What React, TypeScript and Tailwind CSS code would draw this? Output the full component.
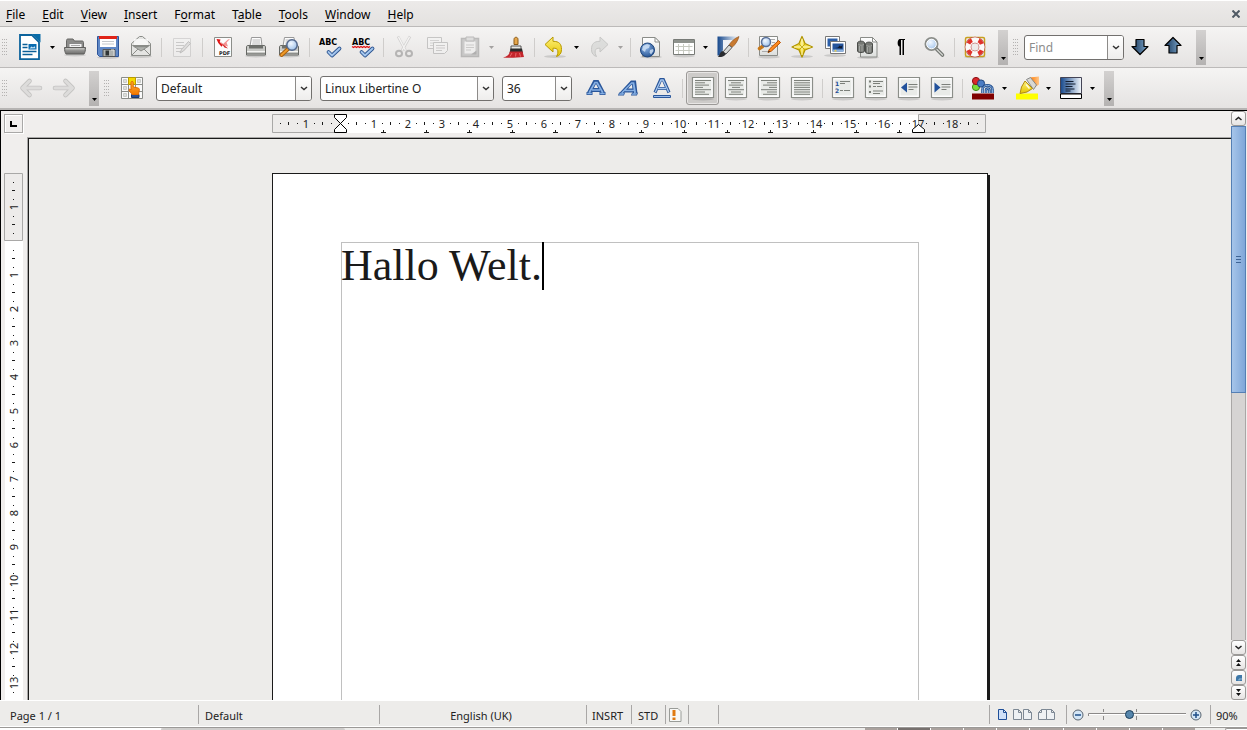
import React, { useEffect, useState } from "react";
import type { ReactNode } from "react";

const UI_FONT = "font-['Noto_Sans',sans-serif]";

function Icon({ children }: { children: ReactNode }) {
  return (
    <svg viewBox="0 0 26 26" className="h-[26px] w-[26px] shrink-0 overflow-visible" fill="none" aria-hidden="true">
      {children}
    </svg>
  );
}

function Gradients() {
  const linear: [string, string, string, boolean][] = [
    ["gPaper", "#ffffff", "#dcdedc", true],
    ["gGray", "#b4b4b2", "#6d6d6b", true],
    ["gYellow", "#fdf07a", "#e5c400", true],
    ["gArrow", "#16365a", "#7fa8cc", false],
    ["gBack", "#16488c", "#f4f8fc", false],
    ["gOrange", "#ff7a00", "#ffc68a", false],
    ["gSkin", "#ffb03a", "#f07800", true],
  ];
  return (
    <svg className="absolute h-0 w-0" aria-hidden="true">
      <defs>
        {linear.map(([id, a, b, down]) => (
          <linearGradient key={id} id={id} x1="0" y1="0" x2={down ? "0" : "1"} y2={down ? "1" : "0"}>
            <stop offset="0" stopColor={a} />
            <stop offset="1" stopColor={b} />
          </linearGradient>
        ))}
        <radialGradient id="gGlobe" cx="0.4" cy="0.35" r="0.7">
          <stop offset="0" stopColor="#8db4e6" />
          <stop offset="1" stopColor="#22508f" />
        </radialGradient>
        <radialGradient id="gLens" cx="0.4" cy="0.35" r="0.7">
          <stop offset="0" stopColor="#f4f9ff" />
          <stop offset="1" stopColor="#9cc0ea" />
        </radialGradient>
      </defs>
    </svg>
  );
}

const Shadow = ({ y = 24 }: { y?: number }) => <ellipse cx="13" cy={y} rx="11" ry="1.5" fill="#000" opacity="0.13" />;

const NewIcon = () => (
  <Icon>
    <path d="M2 1h12l7 7v17.2H2z" fill="#fff" stroke="#0c639c" strokeWidth="1.8" />
    <path d="M14 0h8.500v8.500z" fill="#0a6ca8" />
    <path d="M4.500 10.500h5M4.500 13.500h5M4.500 17.500h14M4.500 20.500h10" stroke="#0a5f98" strokeWidth="1.600" />
    <path d="M10.500 10h8v5.500h-8z" fill="#0a6cb0" />
    <path d="M11.500 14.500l2-2 1.500 1 1.500-1.200 1 2z" fill="#cfe7f7" />
  </Icon>
);
const OpenIcon = () => (
  <Icon>
    <Shadow y={21} />
    <path d="M4.500 6.500c0-1 .5-1.500 1.500-1.500h5l1.500 2h7.500c1 0 1.500.5 1.500 1.500V14h-17z" fill="#8c8c8a" stroke="#666664" />
    <path d="M7 9.500h13v5H7z" fill="#f4f4f4" stroke="#888" />
    <path d="M9 11.500h9" stroke="#aaa" />
    <path d="M2.500 13.500h21c0 3-.5 5-1.500 6.500H4c-1-1.500-1.500-3.500-1.500-6.500z" fill="url(#gGray)" stroke="#5f5f5d" />
    <path d="M4 14.800h18" stroke="#c9c9c7" />
  </Icon>
);
const SaveIcon = () => (
  <Icon>
    <Shadow y={23.500} />
    <path d="M2.500 2.500h21v20h-19l-2-2z" fill="#5f88c6" stroke="#2e559a" />
    <path d="M5 2.500h16v10.500H5z" fill="#fff" />
    <path d="M4 2h18v3H4z" fill="#e02418" />
    <path d="M7 7.500h12M7 10h12" stroke="#c4c8cc" />
    <path d="M8 15.500h12v7H8z" fill="#aeb2b0" stroke="#555" />
    <path d="M10.500 16.500h3.500v5h-3.500z" fill="#2f3435" />
    <path d="M16 16h3v6" stroke="#e2e2e0" />
  </Icon>
);
const MailIcon = () => (
  <Icon>
    <Shadow y={22.500} />
    <path d="M3.500 9.500L11.500 2.500h3l8 7v12h-19z" fill="#e4e4e2" stroke="#8a8c88" />
    <path d="M6 5h14v8.500H6z" fill="#fff" opacity="0.700" />
    <path d="M4.500 11.500h17L13 17z" fill="#b0b2ae" stroke="#8a8c88" />
    <path d="M4 21l6-6M22 21l-6-6" stroke="#8a8c88" />
    <path d="M6 12.500h14" stroke="#8a8c88" strokeWidth="1.500" />
  </Icon>
);
const EditIcon = () => (
  <Icon>
    <g opacity="0.300">
      <path d="M4.500 4.500h17v18h-17z" fill="#f6f6f6" stroke="#999" />
      <path d="M7 8.500h8M7 11.500h8M7 14.500h6M7 17.500h4" stroke="#777" />
      <path d="M11 19l1.500-3.500 7-8 2 2-7 7.500z" fill="#bbb" stroke="#555" />
    </g>
  </Icon>
);
const PdfIcon = () => (
  <Icon>
    <path d="M4.500 3.500h17v19h-17z" fill="#fcfcfc" stroke="#8c8e8a" />
    <path d="M6.500 5l4 .5-.8 2.500 3 3.200-1.200 1.500-3.200-3.600z" fill="#e01414" />
    <path d="M13 10l5-4.500 2-.5-3.500 3.500 1.500 4-3.500-1z" fill="#f29090" />
    <path d="M10 7.500l8 7-3.500-1z" fill="#d42020" />
    <text x="9" y="21" fontSize="5" fontWeight="bold" fill="#222" fontFamily="DejaVu Sans, sans-serif">PDF</text>
  </Icon>
);
const PrinterBody = () => (
  <>
    <Shadow y={22} />
    <path d="M7 12L8.500 3.500h9.500L19 12z" fill="#fdfdfd" stroke="#999" />
    <path d="M9.500 6h7.500M9.500 8h7.500M9 10h8.500" stroke="#bbb" />
    <path d="M3.500 13c0-1 .5-1.500 1.500-1.500h16c1 0 1.500.5 1.500 1.500v8h-19z" fill="#c9cac7" stroke="#666864" />
    <path d="M6 11.500h14v3H6z" fill="#6e706c" />
    <path d="M4 17.500h18" stroke="#f5f5f3" />
    <path d="M4 19.500h18" stroke="#8d8f8b" />
  </>
);
const PrintIcon = () => (
  <Icon>
    <PrinterBody />
  </Icon>
);
const PreviewIcon = () => (
  <Icon>
    <PrinterBody />
    <path d="M12 15l-6.500 6" stroke="#a86010" strokeWidth="4" strokeLinecap="round" />
    <path d="M12 15l-6.500 6" stroke="#f09a28" strokeWidth="2" strokeLinecap="round" />
    <circle cx="16" cy="11" r="5.200" fill="url(#gLens)" stroke="#54688c" strokeWidth="1.500" />
  </Icon>
);
const Check = () => (
  <>
    <path d="M11.500 18l3.500 3.500 7.500-7" stroke="#2d5590" strokeWidth="3.800" strokeLinejoin="round" strokeLinecap="round" />
    <path d="M11.500 18l3.500 3.500 7.500-7" stroke="#a4c6ee" strokeWidth="1.900" strokeLinejoin="round" strokeLinecap="round" />
  </>
);
const Abc = () => (
  <text x="2" y="11" fontSize="8" fontWeight="bold" fill="#000" fontFamily="DejaVu Sans, sans-serif">ABC</text>
);
const SpellIcon = () => (
  <Icon>
    <Abc />
    <Check />
  </Icon>
);
const AutoSpellIcon = () => (
  <Icon>
    <Abc />
    <path d="M2 12.500l1.500 1 1.500-1 1.500 1 1.500-1 1.500 1 1.500-1 1.500 1 1.500-1 1.500 1 1.500-1 1.500 1 1.500-1" stroke="#e01010" strokeWidth="1.200" />
    <Check />
  </Icon>
);
const CutIcon = () => (
  <Icon>
    <g opacity="0.350">
      <path d="M7 2.500l7.500 14M19 2.500l-8 14" stroke="#999" strokeWidth="2.600" />
      <path d="M7.500 3l7 13.500M18.500 3l-7.500 13.500" stroke="#fff" strokeWidth="1.400" />
      <ellipse cx="8" cy="19.500" rx="3" ry="2.800" stroke="#555" strokeWidth="2" />
      <ellipse cx="18" cy="19.500" rx="3" ry="2.800" stroke="#555" strokeWidth="2" />
    </g>
  </Icon>
);
const CopyIcon = () => (
  <Icon>
    <g opacity="0.400">
      <path d="M3.500 3.500h14v11h-14z" fill="#f7f7f7" stroke="#888" />
      <path d="M6 6.500h9M6 9h9M6 11.500h5" stroke="#aaa" />
      <path d="M9.500 8.500h14v8l-3 3h-11z" fill="#f7f7f7" stroke="#888" />
      <path d="M12 11.500h9M12 14h9M12 16.500h6" stroke="#999" />
    </g>
  </Icon>
);
const PasteIcon = () => (
  <Icon>
    <g opacity="0.500">
      <path d="M4.500 4.500h17v18h-17z" fill="#aaa" stroke="#888" strokeWidth="1.500" />
      <path d="M7 7h12v13H7z" fill="#f0f0f0" stroke="#aaa" />
      <path d="M9 3h8v4H9z" fill="#ccc" stroke="#888" />
      <path d="M9 11h8M9 13.500h8M9 16h5" stroke="#aaa" />
      <path d="M14 20.500h5.500v-4z" fill="#777" />
    </g>
  </Icon>
);
const BrushIcon = () => (
  <Icon>
    <path d="M13 10.500V5.500c0-3 4-3 4 0v5z" fill="#e4a54a" stroke="#8a5a18" />
    <path d="M10 12h10v4H10z" fill="#e8e8e4" stroke="#555" />
    <path d="M9.500 14.500h11.500l1 4.500H8.500z" fill="#2c2c2c" />
    <path d="M9 17.500h12.500l1.500 5.500c-6 .5-14 1-21 .5 4-1 6-2.500 7-6z" fill="#c4262c" />
    <path d="M11 19l-2 3.500M15 19l-.5 3.500M18.500 19l1 3.500" stroke="#e86a6a" />
  </Icon>
);
const undoPath = "M3 10.500L11 3v4.300c6.500 0 8.500 3 8.500 8.200 0 3.500-1.500 6-5 7 1.200-2 1.700-4 1.200-6-.6-2-1.700-2.300-4.700-2.300V18z";
const UndoIcon = () => (
  <Icon>
    <Shadow y={22.500} />
    <path d={undoPath} fill="url(#gYellow)" stroke="#b89a00" strokeLinejoin="round" />
  </Icon>
);
const RedoIcon = () => (
  <Icon>
    <g opacity="0.450" transform="translate(25 0) scale(-1 1)">
      <path d={undoPath} fill="#c8cac8" stroke="#9a9c9a" strokeLinejoin="round" />
    </g>
  </Icon>
);
const LinkIcon = () => (
  <Icon>
    <Shadow y={23} />
    <path d="M4.500 3.500h12.500l4.500 4.500v14.500h-17z" fill="url(#gPaper)" stroke="#8a8c88" />
    <path d="M17 3.500v4.500h4.500z" fill="#fff" stroke="#8a8c88" />
    <circle cx="9.500" cy="16" r="7" fill="url(#gGlobe)" stroke="#1f467e" />
    <path d="M5 12l4-2 3 1-1 3-3 1-1 3-3-2zM12 16l3-1 .5 2-2.500 3.500-1.500-2z" fill="#d5e5f6" opacity="0.800" />
  </Icon>
);
const TableIcon = () => (
  <Icon>
    <Shadow y={22} />
    <path d="M2.500 5.500h21v15h-21z" fill="#fff" stroke="#777a76" />
    <path d="M3 6h20v3H3z" fill="#8e928d" />
    <path d="M4.500 12.500h17M4.500 16.500h17M7.500 10v10M12.500 10v10M18 10v10" stroke="#c6c9c0" />
  </Icon>
);
const DrawIcon = () => (
  <Icon>
    <path d="M2.500 2.500H23l-4 3.500H8v10l-3 5.500H2.500z" fill="url(#gBack)" />
    <path d="M8 6.500h11v8H8z" fill="#eef2f8" />
    <path d="M24 2.500c-4 1.500-8 5-10 8.500l3 2.500c3.500-3 6-7 7-11z" fill="#c87a30" stroke="#8c4a10" strokeWidth="0.600" />
    <path d="M14 11l3 2.500-6 6.500-3-2z" fill="#d8dad8" stroke="#555" />
    <path d="M7.500 17l3.500 3c-2 3.500-6 3-8.500 3 2-.5 2-5 5-6z" fill="#2a2c30" />
  </Icon>
);
const FindReplaceIcon = () => (
  <Icon>
    <Shadow y={23} />
    <path d="M3.500 2.500h18v19h-18z" fill="url(#gPaper)" stroke="#8a8c88" />
    <path d="M14 5.500h5M16 8.500h3M15 11.500h4M6 17.500h8" stroke="#aaa" />
    <path d="M6.500 12.500l-3 2" stroke="#c87818" strokeWidth="3.500" strokeLinecap="round" />
    <circle cx="10" cy="8" r="4.500" fill="url(#gLens)" stroke="#5a7098" strokeWidth="1.500" />
    <path d="M12 18.500l1.500-3.500 9-8.500 2 2-9 8.500z" fill="#ff8a1e" stroke="#b84f00" />
    <path d="M12 18.500l.8-2 1.200 1.200z" fill="#222" />
  </Icon>
);
const StarIcon = () => (
  <Icon>
    <Shadow y={22.500} />
    <path d="M13 2.500L16 9.500 23.500 13 16 16l-3 7-3-7-7-3 7-3.500z" fill="url(#gYellow)" stroke="#b09400" strokeWidth="1.300" strokeLinejoin="round" />
    <path d="M13 4.500V21M5 13h16.500" stroke="#fffbd0" />
    <path d="M13 13l3-3M13 13l-3-3M13 13l3 3M13 13l-3 3" stroke="#b9a000" strokeWidth="0.800" />
  </Icon>
);
const GalleryIcon = () => (
  <Icon>
    <Shadow y={21.500} />
    <path d="M3.500 2.500h14v12h-14z" fill="#fff" stroke="#777" />
    <path d="M5.500 4.500h10v8h-10z" fill="#2c5fa8" />
    <path d="M8.500 7.500h15v12h-15z" fill="#fff" stroke="#777" />
    <path d="M10.500 9.500h11v8h-11z" fill="#24549c" />
    <path d="M10.500 15.500h11v2h-11z" fill="#8fb4e0" />
    <path d="M13 14l3-.5 1.500-2 1.500 1 1.500-1.500-.5 3.500z" fill="#101c30" />
    <path d="M12 17.500l1.500-2 1.500 2z" fill="#f5d040" />
  </Icon>
);
const Binocular = ({ x, y }: { x: number; y: number }) => (
  <g transform={`translate(${x} ${y})`}>
    <path d="M0 2c0-2.500 7-2.500 7 0v8c0 2-7 2-7 0z" fill="#777975" stroke="#4a4c49" />
    <path d="M1 3.500c2 1 3.500 1 5.500 0M2 5v5.500M4.500 5v5.500" stroke="#b0b2ae" strokeWidth="0.800" />
  </g>
);
const SourceIcon = () => (
  <Icon>
    <Shadow y={23.500} />
    <path d="M5.500 3.500h12l4.500 4.500v15h-16.500z" fill="url(#gPaper)" stroke="#8a8c88" />
    <path d="M17.500 3.500v4.500h4.500z" fill="#fff" stroke="#8a8c88" />
    <Binocular x={2.500} y={7} />
    <Binocular x={10.500} y={8} />
  </Icon>
);
const PilcrowIcon = () => (
  <Icon>
    <path d="M16 5v16h-1.500V6H13v15h-1.500v-8.500C9 12.500 9 5 12 5z" fill="#000" />
    <path d="M15.500 5.500H17" stroke="#000" />
  </Icon>
);
const ZoomIcon = () => (
  <Icon>
    <path d="M15.500 15l6 6" stroke="#6d706c" strokeWidth="3.600" strokeLinecap="round" />
    <path d="M16 15.500l5.500 5.500" stroke="#d0d2ce" strokeWidth="1.500" strokeLinecap="round" />
    <circle cx="10.500" cy="10" r="6" fill="url(#gLens)" stroke="#8a8d89" strokeWidth="2" />
    <circle cx="10.500" cy="10" r="4.800" stroke="#fff" />
  </Icon>
);
const HelpIcon = () => (
  <Icon>
    <Shadow y={23} />
    <rect x="3.500" y="3.500" width="19" height="19" rx="1.500" stroke="#c8a020" strokeWidth="1.500" />
    <circle cx="13" cy="13" r="7" stroke="#b43a34" strokeWidth="6.500" />
    <circle cx="13" cy="13" r="7" stroke="#fafaf8" strokeWidth="5.400" />
    <circle cx="13" cy="13" r="7.500" stroke="#e0322c" strokeWidth="4.200" strokeDasharray="4.900 6.900" strokeDashoffset="-3.450" />
  </Icon>
);
const FindArrow = ({ up = false }: { up?: boolean }) => (
  <Icon>
    <path
      d={up ? "M13 3.500l8 8h-4v7.500H9v-7.500H5z" : "M9 5.500h8v7h4L13 20.500l-8-8h4z"}
      fill="url(#gArrow)" stroke="#000" strokeWidth="1.200" strokeLinejoin="round"
    />
  </Icon>
);
const NavArrow = ({ right = false }: { right?: boolean }) => (
  <Icon>
    <g transform={right ? "translate(26 0) scale(-1 1)" : undefined} strokeLinecap="round" strokeLinejoin="round">
      <path d="M11.500 6L4.500 13l7 7M5 13h17" stroke="#c4c3c2" strokeWidth="4.600" />
      <path d="M11.500 6L4.500 13l7 7M5 13h17" stroke="#dddcdb" strokeWidth="3" />
    </g>
  </Icon>
);
const StylesIcon = () => (
  <Icon>
    <path d="M2.500 2.500h21v21h-21z" fill="#fafafa" stroke="#8a8c88" />
    <path d="M9.500 2.500v21M16.500 2.500v21M2.500 9.500h21M2.500 16.500h21" stroke="#8a8c88" />
    <path d="M4.500 4.500h3v3h-3zM18.500 4.500h3v3h-3zM4.500 11.500h3v3h-3zM4.500 18.500h3v3h-3z" fill="#dcdedb" stroke="#c8cac7" />
    <path d="M9.500 2.500h7v7h-7z" fill="#f5d800" stroke="#b89a00" />
    <path d="M12.500 19.500h7.500v3h-7.500z" fill="#284f94" stroke="#18366c" />
    <path d="M12 7.500c0-1.500 2.200-1.500 2.200 0V12l4.800 1c1.200.3 1.500 1 1.300 2.200l-.8 4.300H13c-.5-1.500-2.500-2.500-3-4.500 0-1.200 1.200-1.200 2 0z" fill="url(#gSkin)" stroke="#e06a00" strokeLinejoin="round" />
  </Icon>
);
const LetterIcon = ({ kind }: { kind: "bold" | "italic" | "underline" }) => {
  if (kind === "underline")
    return (
      <Icon>
        <path d="M6 17.500L11.700 4.500h2.600L20 17.500M9 13.500h8" stroke="#2a569a" strokeWidth="3.200" />
        <path d="M6.300 17L11.900 5h2.200l5.600 12M9 13.500h8" stroke="#a8c8f0" strokeWidth="1.300" />
        <path d="M4.500 20.500h17v2h-17z" fill="#9abcec" stroke="#2a569a" />
      </Icon>
    );
  return (
    <Icon>
      <g transform={kind === "italic" ? "translate(6.500 .5) skewX(-22)" : undefined}>
        <path d="M6 18L11.700 7h2.600L20 18M9 15h8" stroke="#2a569a" strokeWidth="4" />
        <path d="M3.500 18.500h6M16.500 18.500h6" stroke="#2a569a" strokeWidth="3" />
        <path d="M6.300 17.500L12 7.500h2l5.700 10M9 15h8M4.300 18.500h4.500M17.200 18.500h4.500" stroke="#86b0e4" strokeWidth="1.700" />
      </g>
    </Icon>
  );
};
const Sheet = ({ children }: { children: ReactNode }) => (
  <Icon>
    <Shadow y={24} />
    <path d="M2.500 2.500h21v20h-21z" fill="#fff" stroke="#8b8e89" strokeWidth="1.200" />
    <path d="M4.500 4.500h17v16h-17z" fill="#e9ebe8" />
    {children}
  </Icon>
);
type Align = "left" | "center" | "right" | "justify";
const AlignIcon = ({ align }: { align: Align }) => (
  <Sheet>
    {[16, 10, 14, 8, 16, 10, 14].map((w, i) => {
      const width = align === "justify" ? 16 : w;
      const x = align === "right" ? 21 - width : align === "center" ? 13 - width / 2 : 5;
      return <path key={i} d={`M${x} ${5.5 + i * 2.300}h${width}`} stroke="#7c807a" />;
    })}
  </Sheet>
);
const NumberListIcon = () => (
  <Sheet>
    <text x="5" y="10.500" fontSize="6" fontWeight="bold" fill="#1f4f98" fontFamily="DejaVu Sans, sans-serif">1</text>
    <text x="5" y="18" fontSize="6" fontWeight="bold" fill="#1f4f98" fontFamily="DejaVu Sans, sans-serif">2</text>
    <path d="M10 6.500h10M10 8.500h5M10 15.500h3M14 15.500h6" stroke="#7c807a" />
  </Sheet>
);
const BulletListIcon = () => (
  <Sheet>
    <path d="M6 6.500h2M6 11.500h2M6 17h2" stroke="#7c807a" strokeWidth="2" />
    <path d="M10 6.500h10M10 8.500h7M10 11.500h3M14 11.500h5M10 16h10M10 18.500h7" stroke="#7c807a" />
  </Sheet>
);
const IndentIcon = ({ increase = false }: { increase?: boolean }) => (
  <Sheet>
    <path d={increase ? "M5.500 7.500l6 5-6 5z" : "M11 7.500l-6 5 6 5z"} fill="#22529c" />
    <path d="M12.500 9.500h9M12.500 12h9M12.500 14.500h5" stroke="#7c807a" />
  </Sheet>
);
const FontColorIcon = () => (
  <Icon>
    <circle cx="6" cy="12" r="3.600" fill="#7cdc3c" stroke="#3d8a14" />
    <circle cx="6" cy="6" r="3.600" fill="#d8282c" stroke="#8c1014" />
    <circle cx="11" cy="8.500" r="3.600" fill="#4b7cc4" stroke="#1f447c" />
    <path d="M12.500 18v-3.500c0-5.500 10-5.500 10 0V18M16 18v-2.500c0-2.500 3.500-2.500 3.500 0V18" stroke="#24508f" strokeWidth="2.600" />
    <path d="M12.500 18v-3.500c0-5.500 10-5.500 10 0V18M16 18v-2.500c0-2.500 3.500-2.500 3.500 0V18" stroke="#86aee0" strokeWidth="1" />
    <path d="M2 18.500h22v6H2z" fill="#800000" />
  </Icon>
);
const HighlightIcon = () => (
  <Icon>
    <path d="M2 18.500h22v6H2z" fill="#ffff00" />
    <path d="M16 2.500l9-1v8l-3 2z" fill="url(#gOrange)" />
    <path d="M12.500 4.500l4-2 6 7.500-3 4.500z" fill="#d8d8d4" stroke="#888" />
    <path d="M11 6l7.500 7.500-5.500 3.500-7 1.500 1.500-6.500z" fill="url(#gYellow)" stroke="#b08a10" />
    <path d="M12 9.500l3.500 4" stroke="#fffbe0" strokeWidth="1.500" />
  </Icon>
);
const BackgroundIcon = () => (
  <Icon>
    <path d="M2.500 2.500h21v16h-21z" fill="url(#gBack)" stroke="#445" />
    <path d="M7.500 6.500h8M7.500 9h10M7.500 11.500h7M7.500 14h9M7.500 16h5" stroke="#101c30" />
    <path d="M2.500 19h21v4.500h-21z" fill="#fff" stroke="#000" />
  </Icon>
);

function Grip() {
  return (
    <svg viewBox="0 0 5 17" className="h-[17px] w-[5px] shrink-0" aria-hidden="true">
      {[0, 2, 4].map((x) =>
        [0, 3, 6, 9, 12, 15].map((y) => <rect key={`${x}-${y}`} x={x} y={y} width="1" height="1" fill="#b4b2b1" />)
      )}
    </svg>
  );
}
function Tool({ label, active = false, children }: { label: string; active?: boolean; children: ReactNode }) {
  return (
    <button
      aria-label={label}
      aria-pressed={active || undefined}
      className={`flex h-[34px] w-[33px] shrink-0 items-center justify-center ${
        active ? "rounded-[3px] border border-[#9b9997] bg-[#cdcbc9] shadow-[inset_0_0_0_1px_#e8e6e5]" : ""
      }`}
    >
      {children}
    </button>
  );
}
function Drop({ label, dim = false }: { label: string; dim?: boolean }) {
  return (
    <button aria-label={label} className="flex h-[34px] w-[11px] shrink-0 items-center justify-center">
      <svg viewBox="0 0 5 3" className="h-[3px] w-[5px]" aria-hidden="true">
        <path d="M0 0h5L2.500 3z" fill={dim ? "#a3a1a0" : "#000"} />
      </svg>
    </button>
  );
}
function Sep() {
  return (
    <span aria-hidden="true" className="flex h-[19px] w-2 shrink-0 justify-center">
      <span className="w-px bg-[#cfcdcb]" />
    </span>
  );
}
function More({ label }: { label: string }) {
  return (
    <button aria-label={label} className="flex h-[35px] w-[10px] shrink-0 items-end justify-center bg-linear-to-b from-[#d3d1d0] to-[#b4b2b1] pb-[5px]">
      <svg viewBox="0 0 5 3" className="h-[3px] w-[5px]" aria-hidden="true">
        <path d="M0 0h5L2.500 3z" fill="#000" />
      </svg>
    </button>
  );
}
function Chevron() {
  return (
    <svg viewBox="0 0 8 5" className="h-[5px] w-2" fill="none" aria-hidden="true">
      <path d="M1 1l3 2.500L7 1" stroke="#333" strokeWidth="1.500" />
    </svg>
  );
}
function Combo({ label, value, width }: { label: string; value: string; width: string }) {
  return (
    <div className={`relative flex h-[25px] shrink-0 ${width}`}>
      <select aria-label={label} defaultValue={value} className="w-full appearance-none rounded-[3px] border border-[#72706e] bg-white pt-[2px] pl-1 text-[12px] leading-[20px] text-[#222]">
        <option>{value}</option>
      </select>
      <span className="pointer-events-none absolute inset-y-px right-px flex w-4 items-center justify-center rounded-r-[2px] border-l border-[#8d8b89] bg-linear-to-b from-white to-[#eeedec]">
        <Chevron />
      </span>
    </div>
  );
}

const menus: [string, number][] = [
  ["File", 0], ["Edit", 0], ["View", 0], ["Insert", 0], ["Format", 1], ["Table", 1], ["Tools", 0], ["Window", 0], ["Help", 0],
];

function MenuBar() {
  return (
    <nav aria-label="Menu" className="flex h-[27px] shrink-0 items-center justify-between border-t border-b border-t-white border-b-[#bcbab9] bg-linear-to-b from-[#eceae9] to-[#e4e2e0] pr-[5px] pl-[6px]">
      <div className="flex gap-[17px] pt-[2px] text-[12px] leading-[18px] text-black">
        {menus.map(([name, key]) => (
          <button key={name}>
            {name.slice(0, key)}
            <span className="underline underline-offset-2">{name[key]}</span>
            {name.slice(key + 1)}
          </button>
        ))}
      </div>
      <button aria-label="Close document" className="flex h-4 w-3 items-center justify-center">
        <svg viewBox="0 0 8 8" className="h-2 w-2" aria-hidden="true">
          <path d="M0.500 0.500l7 7M7.500 0.500l-7 7" stroke="#505a64" strokeWidth="2" />
        </svg>
      </button>
    </nav>
  );
}

function StandardToolbar() {
  return (
    <div role="toolbar" aria-label="Standard" className="flex h-[41px] shrink-0 items-center border-b border-[#bcbab9] bg-linear-to-b from-[#f5f4f3] to-[#e5e3e2] pl-[2px]">
      <Grip />
      <div className="flex items-center pl-[7px]">
        <Tool label="New"><NewIcon /></Tool>
        <Drop label="New document types" />
        <Tool label="Open"><OpenIcon /></Tool>
        <Tool label="Save"><SaveIcon /></Tool>
        <Tool label="Email"><MailIcon /></Tool>
        <Sep />
        <Tool label="Edit file"><EditIcon /></Tool>
        <Sep />
        <Tool label="Export as PDF"><PdfIcon /></Tool>
        <Tool label="Print"><PrintIcon /></Tool>
        <Tool label="Page preview"><PreviewIcon /></Tool>
        <Sep />
        <Tool label="Spelling"><SpellIcon /></Tool>
        <Tool label="AutoSpellcheck"><AutoSpellIcon /></Tool>
        <Sep />
        <Tool label="Cut"><CutIcon /></Tool>
        <Tool label="Copy"><CopyIcon /></Tool>
        <Tool label="Paste"><PasteIcon /></Tool>
        <Drop label="Paste options" dim />
        <Tool label="Clone formatting"><BrushIcon /></Tool>
        <Sep />
        <Tool label="Undo"><UndoIcon /></Tool>
        <Drop label="Undo history" />
        <Tool label="Redo"><RedoIcon /></Tool>
        <Drop label="Redo history" dim />
        <Sep />
        <Tool label="Hyperlink"><LinkIcon /></Tool>
        <Tool label="Table"><TableIcon /></Tool>
        <Drop label="Table size" />
        <Tool label="Draw functions"><DrawIcon /></Tool>
        <Sep />
        <Tool label="Find and replace"><FindReplaceIcon /></Tool>
        <Tool label="Navigator"><StarIcon /></Tool>
        <Tool label="Gallery"><GalleryIcon /></Tool>
        <Tool label="Data sources"><SourceIcon /></Tool>
        <Tool label="Nonprinting characters"><PilcrowIcon /></Tool>
        <Tool label="Zoom"><ZoomIcon /></Tool>
        <Sep />
        <Tool label="Help"><HelpIcon /></Tool>
      </div>
      <div className="flex items-center pl-[7px]">
        <More label="More standard tools" />
      </div>
      <div className="flex items-center gap-[6px] pl-[5px]">
        <Grip />
        <div className="flex h-[25px] w-[100px] overflow-hidden rounded-[3px] border border-[#72706e] bg-white">
          <input aria-label="Find" placeholder="Find" className="w-full min-w-0 flex-1 bg-transparent pt-[2px] pl-1 text-[12px] outline-none placeholder:text-[#8c8c8c]" />
          <button aria-label="Find history" className="flex w-4 items-center justify-center border-l border-[#8d8b89] bg-linear-to-b from-white to-[#eeedec]">
            <Chevron />
          </button>
        </div>
      </div>
      <div className="-ml-px flex items-center">
        <Tool label="Find next"><FindArrow /></Tool>
        <Tool label="Find previous"><FindArrow up /></Tool>
      </div>
      <div className="flex items-center pl-[7px]">
        <More label="More find tools" />
      </div>
    </div>
  );
}

function FormattingToolbar() {
  return (
    <div role="toolbar" aria-label="Formatting" className="flex h-[42px] shrink-0 items-center border-b-2 border-[#b6b4b3] bg-linear-to-b from-[#f5f4f3] to-[#e5e3e2] pl-[2px]">
      <Grip />
      <div className="flex items-center pl-[7px]">
        <Tool label="Back"><NavArrow /></Tool>
        <Tool label="Forward"><NavArrow right /></Tool>
      </div>
      <div className="flex items-center gap-[5px] pl-[9px]">
        <More label="More navigation tools" />
        <Grip />
      </div>
      <div className="flex items-center gap-2 pl-[6px]">
        <Tool label="Styles and formatting"><StylesIcon /></Tool>
        <Combo label="Apply style" value="Default" width="w-[156px]" />
        <Combo label="Font name" value="Linux Libertine O" width="w-[174px]" />
        <Combo label="Font size" value="36" width="w-[70px]" />
      </div>
      <div className="flex items-center pl-[7px]">
        <Tool label="Bold"><LetterIcon kind="bold" /></Tool>
        <Tool label="Italic"><LetterIcon kind="italic" /></Tool>
        <Tool label="Underline"><LetterIcon kind="underline" /></Tool>
        <Sep />
        <Tool label="Align left" active><AlignIcon align="left" /></Tool>
        <Tool label="Centre"><AlignIcon align="center" /></Tool>
        <Tool label="Align right"><AlignIcon align="right" /></Tool>
        <Tool label="Justified"><AlignIcon align="justify" /></Tool>
        <Sep />
        <Tool label="Numbering"><NumberListIcon /></Tool>
        <Tool label="Bullets"><BulletListIcon /></Tool>
        <Tool label="Decrease indent"><IndentIcon /></Tool>
        <Tool label="Increase indent"><IndentIcon increase /></Tool>
        <Sep />
        <Tool label="Font colour"><FontColorIcon /></Tool>
        <Drop label="Font colours" />
        <Tool label="Highlighting"><HighlightIcon /></Tool>
        <Drop label="Highlighting colours" />
        <Tool label="Background colour"><BackgroundIcon /></Tool>
        <Drop label="Background colours" />
      </div>
      <div className="flex items-center pl-[6px]">
        <More label="More formatting tools" />
      </div>
    </div>
  );
}

const CM = 34;

function HorizontalRuler() {
  const quarters = Array.from({ length: 83 }, (_, i) => i - 7);
  return (
    <svg viewBox="0 0 716 21" className="h-[21px] w-[716px] shrink-0 font-['Noto_Sans',sans-serif]" role="img" aria-label="Horizontal ruler">
      <path d="M69 1h578v18H69z" fill="#fff" />
      <path d="M.5 .5h68v18H.5zM646.500 .5h67v18h-67z" fill="#edebea" stroke="#a9a8a7" />
      {quarters.map((q) => {
        const x = Math.round(68 + (q * CM) / 4);
        if (q === 0 || x > 708) return null;
        if (q % 4 === 0)
          return (
            <text key={q} x={x} y="14" fontSize="11" textAnchor="middle" fill="#222">
              {Math.abs(q / 4)}
            </text>
          );
        const half = q % 2 === 0;
        return <rect key={q} x={x - 1} y={half ? 8 : 9} width="1" height={half ? 3 : 1} fill="#1a1a1a" />;
      })}
      {Array.from({ length: 13 }, (_, i) => (
        <path key={i} d={`M${109 + i * 43} 18.500h5M${111.5 + i * 43} 16v3`} stroke="#1a1a1a" />
      ))}
      <path d="M62.500 .5h12v3l-6 6-6-6zM62.500 18.500h12v-3l-6-6-6 6z" fill="#fff" stroke="#000" />
      <path d="M640.500 18.500h12v-3l-6-5-6 5z" fill="#fff" stroke="#000" />
    </svg>
  );
}

function useWindowHeight() {
  const [height, setHeight] = useState(window.innerHeight);
  useEffect(() => {
    const update = () => setHeight(window.innerHeight);
    window.addEventListener("resize", update);
    return () => window.removeEventListener("resize", update);
  }, []);
  return height;
}

function VerticalRuler() {
  const visible = useWindowHeight() - 203;
  const count = Math.max(0, Math.floor((visible - 68) / (CM / 4)) + 7);
  const quarters = Array.from({ length: count }, (_, i) => i - 7);
  return (
    <div className="min-h-0 flex-1 overflow-hidden bg-linear-to-r from-transparent from-[1px] via-white via-[1px] to-white">
      <svg viewBox="0 0 19 67" className="h-[67px] w-[19px] overflow-visible font-['Noto_Sans',sans-serif]" role="img" aria-label="Vertical ruler">
        <path d="M.5 .5h18v67H.5z" fill="#edebea" stroke="#a9a8a7" />
        {quarters.map((q) => {
          const y = Math.round(68 + (q * CM) / 4);
          if (q === 0) return null;
          if (q % 4 === 0)
            return (
              <text key={q} x="0" y="0" transform={`translate(14 ${y}) rotate(-90)`} fontSize="11" textAnchor="middle" fill="#222">
                {Math.abs(q / 4)}
              </text>
            );
          const half = q % 2 === 0;
          return <rect key={q} x={half ? 8 : 9} y={y} width={half ? 3 : 1} height="1" fill="#1a1a1a" />;
        })}
      </svg>
    </div>
  );
}

function ScrollButton({ label, children }: { label: string; children: ReactNode }) {
  return (
    <button aria-label={label} className="flex h-[15px] w-full shrink-0 items-center justify-center rounded-[3px] border border-[#9b9997] bg-linear-to-b from-white to-[#e6e4e3]">
      <svg viewBox="0 0 9 9" className="h-[9px] w-[9px]" fill="none" aria-hidden="true">
        {children}
      </svg>
    </button>
  );
}

function Scrollbar() {
  return (
    <div className="mr-px flex w-[15px] shrink-0 flex-col">
      <ScrollButton label="Scroll up"><path d="M1.500 6l3-2.500 3 2.500" stroke="#222" strokeWidth="1.500" /></ScrollButton>
      <div className="min-h-0 flex-1 border-x border-[#a9a7a6] bg-[#d6d4d3]">
        <div role="scrollbar" aria-controls="document" aria-valuenow={0} aria-label="Vertical scroll position" className="-mx-px flex h-[52%] flex-col items-center justify-center gap-[2px] border border-[#557fb4] bg-linear-to-r from-[#a6c5ea] to-[#80a6d8]">
          <span className="h-px w-[5px] bg-[#3f6596]" />
          <span className="h-px w-[5px] bg-[#3f6596]" />
          <span className="h-px w-[5px] bg-[#3f6596]" />
        </div>
      </div>
      <ScrollButton label="Scroll down"><path d="M1.500 3l3 2.500 3-2.500" stroke="#222" strokeWidth="1.500" /></ScrollButton>
      <ScrollButton label="Previous page"><path d="M4.500 1L7 4H2zM4.500 5L7 8H2z" fill="#111" /></ScrollButton>
      <ScrollButton label="Navigation"><path d="M2 8V5c0-2 1.500-3 3-3h3v6z" fill="#3f78a8" /><path d="M5 7.500V6h3" stroke="#a8cce4" strokeWidth="0.800" /></ScrollButton>
      <ScrollButton label="Next page"><path d="M4.500 4L7 1H2zM4.500 8L7 5H2z" fill="#111" /></ScrollButton>
    </div>
  );
}

function Workspace() {
  return (
    <main className="flex min-h-0 flex-1 border-t border-l border-black bg-[#f0eeed]">
      <div className="flex w-[26px] shrink-0 flex-col pr-[4px] pl-[3px]">
        <button aria-label="Tab type" className="mt-[3px] mb-[40px] flex h-[19px] w-[19px] shrink-0 items-center justify-center border border-[#a9a8a7] shadow-[1px_1px_0_#fff,inset_1px_1px_0_#fff]">
          <span className="h-[6px] w-[7px] border-b-2 border-l-2 border-black" />
        </button>
        <VerticalRuler />
      </div>
      <div className="flex min-w-0 flex-1 flex-col">
        <div className="flex h-[26px] shrink-0 items-start justify-center overflow-hidden pt-[3px] pl-[2px]">
          <HorizontalRuler />
        </div>
        <div className="flex min-h-0 flex-1 border-t border-l border-[#a9a8a7]">
          <div id="document" className="flex min-w-0 flex-1 items-start justify-center overflow-hidden border-t border-l border-[#1a1a1a] bg-[#edecea] pt-[34px]">
            <article className="flex h-[1010px] w-[716px] shrink-0 border border-[#1a1a1a] bg-white p-[68px] shadow-[2px_2px_0_#1a1a1a]">
              <div className="flex-1 border border-[#c0c0c0]">
                <p className="-ml-px flex items-start font-['Liberation_Serif',serif] text-[44px] leading-[46px] text-[#1a1a1a]">
                  Hallo Welt.
                  <span aria-hidden="true" className="-mt-px h-12 w-[2px] bg-black" />
                </p>
              </div>
            </article>
          </div>
        </div>
      </div>
      <Scrollbar />
    </main>
  );
}

function Cell({ width, children }: { width: string; children?: ReactNode }) {
  return (
    <div className={`flex h-[19px] shrink-0 items-center border-r border-[#a9a7a6] ${width}`}>{children}</div>
  );
}

const PageGlyph = ({ x, active = false }: { x: number; active?: boolean }) => (
  <path d={`M${x + 0.5} .5h5l3 3v7h-8zM${x + 5.5} .5v3h3`} fill={active ? "#cfe0f8" : "#eef1f4"} stroke={active ? "#1f4f98" : "#7d8894"} />
);

function ZoomButton({ label, plus = false }: { label: string; plus?: boolean }) {
  return (
    <button aria-label={label} className="flex h-4 w-3 shrink-0 items-center justify-center">
      <svg viewBox="0 0 12 12" className="h-3 w-3" aria-hidden="true">
        <circle cx="6" cy="6" r="5" fill="#d4e6f6" stroke="#5a6570" />
        <path d={plus ? "M3 6h6M6 3v6" : "M3 6h6"} stroke="#1f4f88" strokeWidth="1.500" />
      </svg>
    </button>
  );
}

function StatusBar() {
  return (
    <footer className="flex h-[28px] shrink-0 items-center border-t border-b border-t-white border-b-[#9b9997] bg-[#edecea] pt-px text-[11px] leading-[16px] text-[#222] shadow-[inset_0_-1px_0_#fff]">
      <Cell width="w-[199px] pt-[2px] pl-[10px]">Page 1 / 1</Cell>
      <Cell width="w-[181px] pt-[2px] pl-[6px]">Default</Cell>
      <Cell width="w-[207px] pt-[2px] justify-center pr-1">English (UK)</Cell>
      <Cell width="w-[45px] pt-[2px] pl-[5px]">INSRT</Cell>
      <Cell width="w-[34px] pt-[2px] pl-[6px]">STD</Cell>
      <Cell width="w-[23px] pl-[3px]">
        <svg viewBox="0 0 13 14" className="h-[14px] w-[13px]" role="img" aria-label="Document modified">
          <path d="M.5 .5h8.500l3 3v10H.5z" fill="#f8f8f6" stroke="#9a9c98" />
          <path d="M3.500 2h3v6h-3zM3.500 9.500h3v2.500h-3z" fill="#e07a10" />
        </svg>
      </Cell>
      <Cell width="w-[30px]" />
      <Cell width="min-w-0 flex-1" />
      <Cell width="w-[77px] gap-[6px] pl-2">
        <button aria-label="Single page">
          <svg viewBox="0 0 9 11" className="h-[11px] w-[9px]"><PageGlyph x={0} active /></svg>
        </button>
        <button aria-label="Multiple pages">
          <svg viewBox="0 0 19 11" className="h-[11px] w-[19px]"><PageGlyph x={0} /><PageGlyph x={10} /></svg>
        </button>
        <button aria-label="Book view">
          <svg viewBox="0 0 17 11" className="h-[11px] w-[17px]">
            <path d="M.5 3.500l3-3h5v10h-8zM8.500 .5h5l3 3v7h-8zM3.500 .5v3h-3M13.500 .5v3h3" fill="#eef1f4" stroke="#7d8894" />
          </svg>
        </button>
      </Cell>
      <Cell width="w-[144px] gap-1 pl-[5px]">
        <ZoomButton label="Zoom out" />
        <div className="relative flex h-4 w-[98px] items-center">
          <svg viewBox="0 0 98 12" className="pointer-events-none absolute h-3 w-[98px]" fill="none" aria-hidden="true">
            <path d="M.5 7V4.500H98M15.500 0v3M15.500 7v4M48.500 0v3M48.500 7v4" stroke="#8b8988" />
            <path d="M1 5.500h97" stroke="#fff" />
          </svg>
          <input
            type="range" min="0" max="100" defaultValue="42" aria-label="Zoom"
            className="relative h-4 w-full appearance-none bg-transparent [&::-webkit-slider-thumb]:h-[9px] [&::-webkit-slider-thumb]:w-[9px] [&::-webkit-slider-thumb]:appearance-none [&::-webkit-slider-thumb]:rounded-full [&::-webkit-slider-thumb]:border [&::-webkit-slider-thumb]:border-[#1c3f5c] [&::-webkit-slider-thumb]:bg-[#5686ac]"
          />
        </div>
        <ZoomButton label="Zoom in" plus />
      </Cell>
      <div className="w-[36px] shrink-0 pt-[2px] pl-[5px]">90%</div>
    </footer>
  );
}

function DesktopPanel() {
  return (
    <div aria-hidden="true" className="flex h-[2px] shrink-0 bg-[#edecea]">
      <div className="w-[161px] bg-white" />
      <div className="w-[184px] rounded-t-sm bg-[#cfcdcb]" />
      <div className="flex-1" />
      <div className="flex w-[330px] gap-px bg-white">
        {Array.from({ length: 10 }, (_, i) => (
          <div key={i} className={`flex-1 ${i === 1 ? "bg-[#77716e]" : "bg-[#aaa29e]"}`} />
        ))}
      </div>
      <div className="ml-[30px] w-[22px] rounded-tl-sm border-t border-l border-[#9b9997] bg-white" />
    </div>
  );
}

export default function App() {
  return (
    <div className={`flex h-screen flex-col overflow-hidden bg-[#edecea] ${UI_FONT}`}>
      <Gradients />
      <MenuBar />
      <StandardToolbar />
      <FormattingToolbar />
      <Workspace />
      <StatusBar />
      <DesktopPanel />
    </div>
  );
}
